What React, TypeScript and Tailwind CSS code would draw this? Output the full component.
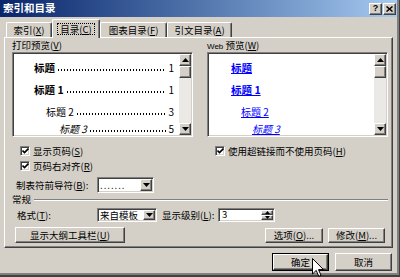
const raised =
  'border border-t-white border-l-white border-r-[#404040] border-b-[#404040] shadow-[inset_-1px_-1px_#808080] bg-[#d4d0c8]'
const sunken =
  'border border-t-[#808080] border-l-[#808080] border-r-white border-b-white shadow-[inset_1px_1px_#404040,inset_-1px_-1px_#d4d0c8]'

const Key = ({ k }: { k: string }) => (
  <span>
    (<span className="underline">{k}</span>)
  </span>
)

const Tri = ({ up = false }: { up?: boolean }) => (
  <svg width="7" height="4" viewBox="0 0 7 4">
    <path d={up ? 'M0 4h7L3.5 0z' : 'M0 0h7L3.5 4z'} fill="#000" />
  </svg>
)

const ScrollBar = () => (
  <div className="w-[12px] h-full flex flex-col bg-[#ebe9e5]">
    <div className={`h-[12px] flex items-center justify-center ${raised}`}>
      <Tri up />
    </div>
    <div className={`h-[12px] ${raised}`} />
    <div className="flex-1" />
    <div className={`h-[12px] flex items-center justify-center ${raised}`}>
      <Tri />
    </div>
  </div>
)

const Check = ({ label }: { label: React.ReactNode }) => (
  <div className="flex items-center gap-[3px] h-[12px] whitespace-nowrap">
    <div className={`w-[10px] h-[10px] bg-white flex items-center justify-center ${sunken}`}>
      <svg width="7" height="6" viewBox="0 0 7 6">
        <path d="M0.5 2.5L2.5 4.5L6.5 0.5" stroke="#000" strokeWidth="1.6" fill="none" />
      </svg>
    </div>
    <span>{label}</span>
  </div>
)

const Combo = ({ text, w }: { text: React.ReactNode; w: string }) => (
  <div className={`${w} h-full bg-white flex items-center shrink-0 ${sunken}`}>
    <span className="flex-1 min-w-0 pl-[2px] leading-[12px] whitespace-nowrap">{text}</span>
    <div className={`w-[12px] h-[calc(100%-2px)] mr-[1px] flex items-center justify-center shrink-0 ${raised}`}>
      <Tri />
    </div>
  </div>
)

const Btn = ({ children, w }: { children: React.ReactNode; w: string }) => (
  <div className={`${w} h-full flex items-center justify-center whitespace-nowrap ${raised}`}>{children}</div>
)

const PrintLine = ({
  text,
  num,
  cls,
}: {
  text: string
  num: string
  cls: string
}) => (
  <div className={`flex items-end h-[12px] leading-[12px] ${cls}`}>
    <span className="whitespace-nowrap">{text}</span>
    <span className="flex-1 min-w-0 h-[2px] mb-[3px] mx-[2px] bg-[radial-gradient(circle,#000_0.6px,transparent_0.9px)] bg-[length:3px_2px] bg-repeat-x" />
    <span className="font-normal not-italic text-[10px]">{num}</span>
  </div>
)

const Tab = ({
  children,
  w,
  active = false,
}: {
  children: React.ReactNode
  w: string
  active?: boolean
}) => (
  <div
    className={`${w} flex items-center justify-center whitespace-nowrap rounded-t-[2px] border-t border-l border-t-white border-l-white border-r border-r-[#404040] shadow-[inset_-1px_0_#808080] bg-[#d4d0c8] ${
      active ? 'h-[19px] -mb-[1px] relative z-10' : 'h-[15px]'
    }`}
  >
    {active ? (
      <span className="border border-dotted border-black px-[2px] leading-[10px]">{children}</span>
    ) : (
      children
    )}
  </div>
)

export default function App() {
  return (
    <div className="relative w-[400px] h-[277px] overflow-hidden bg-[#404040] font-['Noto_Sans_CJK_SC',sans-serif] text-[9.5px] text-black">
      <div className="w-[399px] h-[275px] bg-[#808080] pr-[1px] pb-[1px]">
        <div className="w-[397px] h-[273px] bg-[#d4d0c8] flex flex-col">
          {/* title bar */}
          <div className="h-[17px] flex items-center bg-linear-to-r from-[#0a246a] to-[#a6caf0] pl-[3px] pr-[1px]">
            <span className="flex-1 text-white font-bold text-[10.5px] leading-none">索引和目录</span>
            <div className="flex gap-[1px]">
              <div className={`w-[13px] h-[12px] flex items-center justify-center ${raised}`}>
                <span className="font-bold text-[9px] leading-none font-['Liberation_Sans',sans-serif]">?</span>
              </div>
              <div className={`w-[13px] h-[12px] flex items-center justify-center ${raised}`}>
                <svg width="7" height="6" viewBox="0 0 7 6">
                  <path d="M0.5 0.5L6.5 5.5M6.5 0.5L0.5 5.5" stroke="#000" strokeWidth="1.5" />
                </svg>
              </div>
            </div>
          </div>

          <div className="flex-1 flex flex-col pl-[4px] pr-[4px]">
            {/* tabs */}
            <div className="flex items-end h-[20px] pl-[2px]">
              <Tab w="w-[46px]">
                索引<Key k="X" />
              </Tab>
              <Tab w="w-[48px]" active>
                目录<Key k="C" />
              </Tab>
              <Tab w="w-[67px]">
                图表目录<Key k="F" />
              </Tab>
              <Tab w="w-[65px]">
                引文目录<Key k="A" />
              </Tab>
            </div>

            {/* panel */}
            <div className="h-[211px] border border-t-white border-l-white border-r-[#404040] border-b-[#404040] shadow-[inset_-1px_-1px_#808080] pl-[7px] pr-[4px] pt-[2px] flex flex-col">
              <div className="grid grid-cols-[181px_181px] gap-x-[14px]">
                {/* left column */}
                <div className="flex flex-col min-w-0">
                  <div className="h-[11px] leading-[11px]">
                    打印预览<Key k="V" />
                  </div>
                  <div className={`mt-[1px] h-[85px] bg-white flex ${sunken}`}>
                    <div className="flex-1 min-w-0 pt-[9px] pr-[5px] flex flex-col">
                      <PrintLine text="标题" num="1" cls="pl-[21px] font-bold text-[10.5px]" />
                      <div className="mt-[10px]">
                        <PrintLine text="标题 1" num="1" cls="pl-[21px] font-bold text-[10.5px]" />
                      </div>
                      <div className="mt-[10px]">
                        <PrintLine text="标题 2" num="3" cls="pl-[33px] text-[10px]" />
                      </div>
                      <div className="mt-[5px]">
                        <PrintLine text="标题 3" num="5" cls="pl-[46px] italic text-[10px]" />
                      </div>
                    </div>
                    <div className="py-[1px] pr-[1px]">
                      <ScrollBar />
                    </div>
                  </div>
                  <div className="mt-[8px] pl-[8px]">
                    <Check
                      label={
                        <>
                          显示页码<Key k="S" />
                        </>
                      }
                    />
                  </div>
                  <div className="mt-[3px] pl-[8px]">
                    <Check
                      label={
                        <>
                          页码右对齐<Key k="R" />
                        </>
                      }
                    />
                  </div>
                  <div className="mt-[5px] h-[16px] flex items-center pl-[4px]">
                    <span className="w-[81px] whitespace-nowrap">
                      制表符前导符<Key k="B" />:
                    </span>
                    <Combo w="w-[57px]" text={<span className="tracking-[1px]">.......</span>} />
                  </div>
                </div>

                {/* right column */}
                <div className="flex flex-col min-w-0">
                  <div className="h-[11px] leading-[11px]">
                    <span className="font-['Liberation_Sans',sans-serif] text-[8px]">Web</span> 预览<Key k="W" />
                  </div>
                  <div className={`mt-[1px] h-[85px] bg-white flex ${sunken}`}>
                    <div className="flex-1 min-w-0 pt-[9px] flex flex-col text-[#0000ff] underline">
                      <div className="h-[12px] leading-[12px] pl-[23px] font-bold text-[10.5px]">标题</div>
                      <div className="mt-[10px] h-[12px] leading-[12px] pl-[23px] font-bold text-[10.5px]">标题 1</div>
                      <div className="mt-[10px] h-[12px] leading-[12px] pl-[33px] text-[10px]">标题 2</div>
                      <div className="mt-[5px] h-[12px] leading-[12px] pl-[44px] italic text-[10px]">标题 3</div>
                    </div>
                    <div className="py-[1px] pr-[1px]">
                      <ScrollBar />
                    </div>
                  </div>
                  <div className="mt-[8px] pl-[8px]">
                    <Check
                      label={
                        <>
                          使用超链接而不使用页码<Key k="H" />
                        </>
                      }
                    />
                  </div>
                </div>
              </div>

              {/* 常规 */}
              <div className="mt-[2px] h-[10px] flex items-center">
                <span className="leading-none pr-[3px]">常规</span>
                <div className="flex-1 border-t border-t-[#808080] border-b border-b-white" />
              </div>
              <div className="mt-[3px] h-[14px] flex items-center pl-[5px]">
                <span className="w-[80px] whitespace-nowrap">
                  格式<Key k="T" />:
                </span>
                <Combo w="w-[60px]" text="来自模板" />
                <span className="w-[61px] pl-[5px] whitespace-nowrap">
                  显示级别<Key k="L" />:
                </span>
                <div className={`w-[57px] h-full bg-white flex items-center ${sunken}`}>
                  <span className="flex-1 pl-[3px] leading-none">3</span>
                  <div className="w-[12px] h-[calc(100%-2px)] mr-[1px] flex flex-col">
                    <div className={`flex-1 flex items-center justify-center ${raised}`}>
                      <svg width="5" height="3" viewBox="0 0 5 3">
                        <path d="M0 3h5L2.5 0z" fill="#000" />
                      </svg>
                    </div>
                    <div className={`flex-1 flex items-center justify-center ${raised}`}>
                      <svg width="5" height="3" viewBox="0 0 5 3">
                        <path d="M0 0h5L2.5 3z" fill="#000" />
                      </svg>
                    </div>
                  </div>
                </div>
              </div>
              <div className="mt-[5px] h-[16px] flex items-center pl-[3px]">
                <Btn w="w-[110px]">
                  显示大纲工具栏<Key k="U" />
                </Btn>
                <div className="flex-1" />
                <div className="flex gap-[5px] h-[15px] pr-[3px]">
                  <Btn w="w-[58px]">
                    选项<Key k="O" />...
                  </Btn>
                  <Btn w="w-[57px]">
                    修改<Key k="M" />...
                  </Btn>
                </div>
              </div>
            </div>

            {/* bottom buttons */}
            <div className="mt-[5px] h-[18px] flex justify-end gap-[6px] pr-[1px]">
              <div className="w-[57px] h-full border border-black">
                <Btn w="w-full">确定</Btn>
              </div>
              <Btn w="w-[57px]">取消</Btn>
            </div>
          </div>
        </div>
      </div>

      {/* mouse pointer */}
      <svg className="absolute left-[312px] top-[258px]" width="12" height="19" viewBox="0 0 12 19">
        <path d="M0.5 0.5V16L4.2 12.4L6.8 18.3L9 17.3L6.5 11.6H11.5Z" fill="#fff" stroke="#000" strokeWidth="1" />
      </svg>
    </div>
  )
}
